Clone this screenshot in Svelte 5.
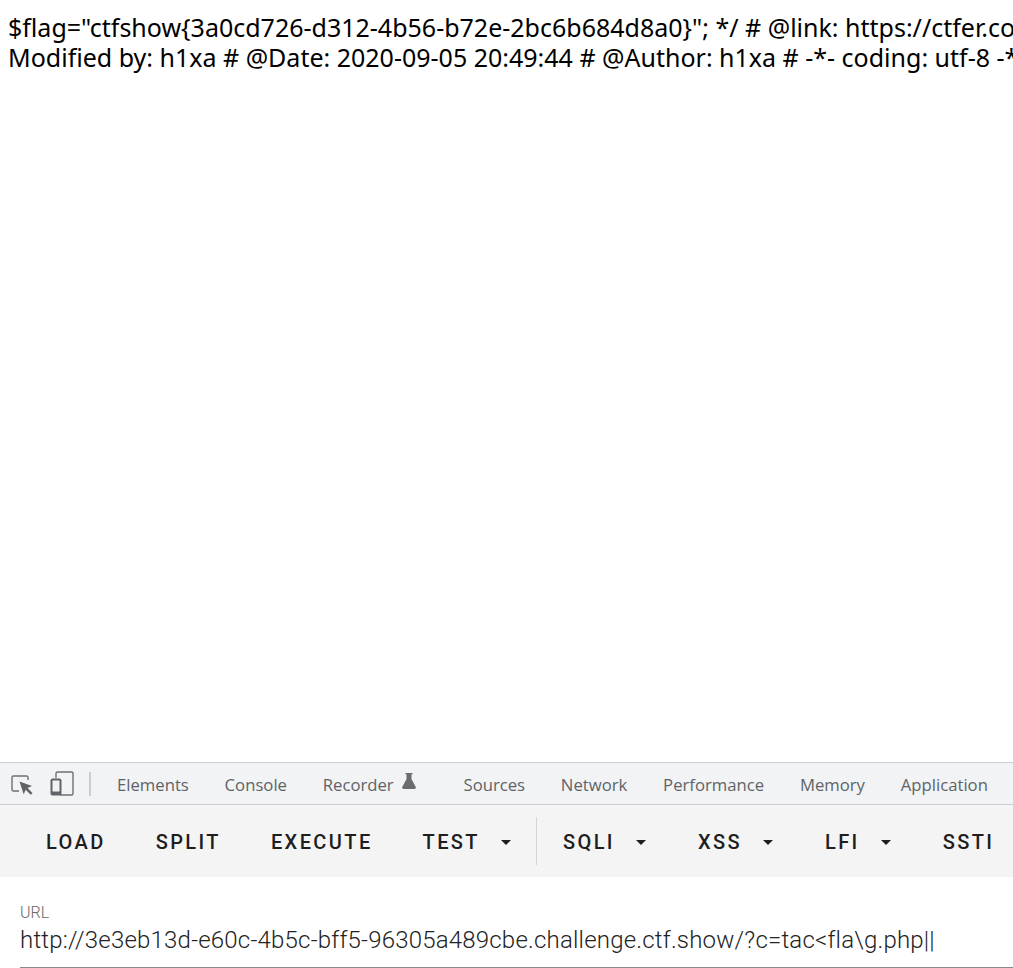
<script>
    const tabs = ['Elements', 'Console', 'Recorder', 'Sources', 'Network', 'Performance', 'Memory', 'Application'];
    const url = 'http://3e3eb13d-e60c-4b5c-bff5-96305a489cbe.challenge.ctf.show/?c=tac<fla\\g.php||';
</script>

<div class="page">
    <main class="output">
        <p>$flag="ctfshow&#123;3a0cd726-d312-4b56-b72e-2bc6b684d8a0&#125;"; */ # @link: https://ctfer.com</p>
        <p>Modified by: h1xa # @Date: 2020-09-05 20:49:44 # @Author: h1xa # -*- coding: utf-8 -*-</p>
    </main>

    <section class="devtools">
        <nav class="tabbar">
            <button class="icon" aria-label="Inspect">
                <svg width="24" height="24" viewBox="0 0 24 24">
                    <path d="M9 19H3.500a1.500 1.500 0 0 1-1.500-1.500V5.500A1.500 1.500 0 0 1 3.500 4h13A1.500 1.500 0 0 1 18 5.500V8" fill="none" stroke="#6e7074" stroke-width="1.400" />
                    <path d="M9.500 9.500 22 14l-4.500 2 5 5-1.800 1.800-5-5-2 4.500z" fill="#5f6368" />
                </svg>
            </button>
            <button class="icon device" aria-label="Device">
                <svg width="24" height="26" viewBox="0 0 24 26">
                    <path d="M6 7V2.500A1.500 1.500 0 0 1 7.500 1h14A1.500 1.500 0 0 1 23 2.500v20a1.500 1.500 0 0 1-1.500 1.500H10" fill="none" stroke="#6e7074" stroke-width="1.400" />
                    <rect x="1.500" y="8.500" width="9" height="15" rx="1" fill="none" stroke="#5f6368" stroke-width="2" />
                    <rect x="1.500" y="20.500" width="9" height="3.500" fill="#5f6368" />
                </svg>
            </button>
            <span class="tab-sep"></span>
            <ul>
                {#each tabs as tab}
                    <li class:recorder={tab === 'Recorder'}>
                        {tab}
                        {#if tab === 'Recorder'}
                            <svg width="14" height="16" viewBox="0 0 14 16">
                                <path d="M3.500 0h7v1.200H9.500V6L14 14.500 13 16H1L0 14.500 4.500 6V1.200h-1z" fill="#6a6c70" />
                            </svg>
                        {/if}
                    </li>
                {/each}
            </ul>
        </nav>

        <div class="toolbar">
            <button>LOAD</button>
            <button>SPLIT</button>
            <button>EXECUTE</button>
            <button class="drop">TEST<span class="caret"></span></button>
            <span class="bar-sep"></span>
            <button class="drop">SQLI<span class="caret"></span></button>
            <button class="drop">XSS<span class="caret"></span></button>
            <button class="drop">LFI<span class="caret"></span></button>
            <button>SSTI</button>
        </div>

        <div class="field">
            <label for="url">URL</label>
            <div id="url" class="value">{url}</div>
        </div>
    </section>
</div>

<style>
    :global(body) {
        margin: 0;
        background: #fff;
        overflow: hidden;
    }
    .page {
        display: flex;
        flex-direction: column;
        height: 968px;
        width: 1013px;
        overflow: hidden;
    }
    .output {
        flex: 1;
        padding: 12px 8px 0;
        font-family: "Noto Sans", sans-serif;
        font-size: 25px;
        line-height: 30px;
        color: #000;
    }
    .output p {
        margin: 0;
        white-space: nowrap;
    }
    .devtools {
        flex: none;
    }
    button {
        background: none;
        border: 0;
        padding: 0;
        font: inherit;
        letter-spacing: inherit;
        color: inherit;
    }
    .tabbar {
        display: flex;
        align-items: center;
        height: 41px;
        padding-left: 10px;
        background: #f1f3f4;
        border-top: 1px solid #cbcdd1;
        border-bottom: 1px solid #cbcdd1;
        font-family: "Open Sans", sans-serif;
        font-size: 16.700px;
        color: #5f6368;
        white-space: nowrap;
    }
    .icon {
        display: flex;
        width: 24px;
        height: 26px;
        align-items: center;
    }
    .device {
        margin-left: 16px;
    }
    .tab-sep {
        width: 2px;
        height: 24px;
        margin: 0 26px 0 15px;
        background: #cbcdd1;
    }
    ul {
        display: flex;
        gap: 35.800px;
        margin: 2px 0 0;
        padding: 0;
        list-style: none;
    }
    .recorder {
        display: flex;
        align-items: flex-start;
        gap: 8px;
        margin-right: 12px;
    }
    .toolbar {
        display: flex;
        align-items: center;
        height: 70px;
        padding: 2px 0 0 46px;
        gap: 50px;
        background: #f4f4f5;
        font-family: Roboto, sans-serif;
        font-size: 20px;
        font-weight: 500;
        letter-spacing: 2.400px;
        color: #1e1e1e;
        white-space: nowrap;
    }
    .drop {
        display: flex;
        align-items: center;
    }
    .caret {
        width: 0;
        height: 0;
        margin: 0 2px 0 21px;
        border-left: 5px solid transparent;
        border-right: 5px solid transparent;
        border-top: 5px solid #1e1e1e;
    }
    .bar-sep {
        width: 1px;
        height: 48px;
        margin: 0 -24px 2px -27px;
        background: #d6d6d6;
    }
    .field {
        padding: 27px 0 0 20px;
        background: #fff;
        font-family: Roboto, sans-serif;
    }
    .field label {
        display: block;
        font-size: 16px;
        line-height: 18px;
        font-weight: 300;
        color: #666;
    }
    .value {
        margin-top: 4px;
        padding-bottom: 13px;
        border-bottom: 1px solid #8a8a8a;
        font-size: 24px;
        line-height: 28px;
        font-weight: 300;
        letter-spacing: 0.200px;
        color: #222;
        white-space: nowrap;
    }
</style>
